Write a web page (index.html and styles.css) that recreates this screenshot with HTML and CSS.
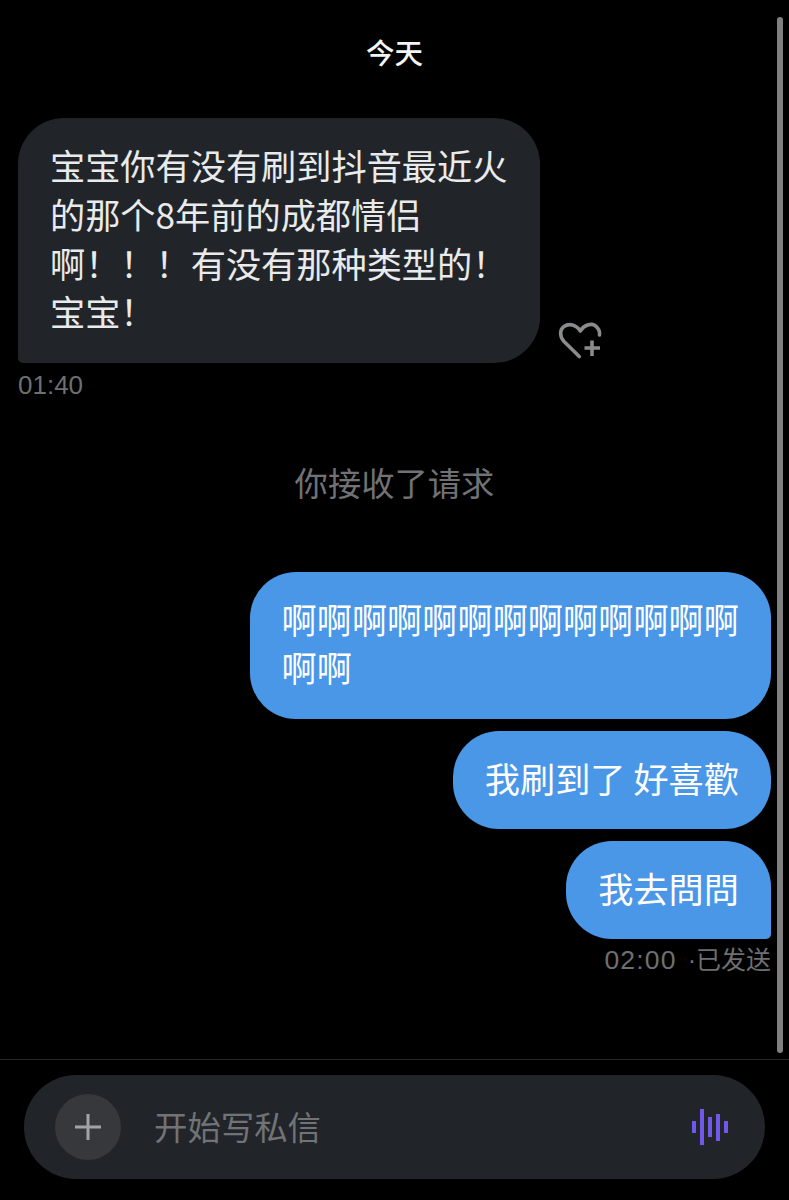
FILE: index.html
```html
<!DOCTYPE html>
<html lang="zh">
<head>
<meta charset="utf-8">
<title>今天</title>
<link rel="stylesheet" href="styles.css">
</head>
<body>
<div class="screen">
  <main class="thread">
    <div class="day">今天</div>
    <div class="incoming">
      <div class="bubble gray">宝宝你有没有刷到抖音最近火<br>的那个8年前的成都情侣<br>啊！！！有没有那种类型的！<br>宝宝！</div>
      <svg class="react" viewBox="0 0 48 42" width="48" height="42" fill="none" stroke="#8a8b8d" stroke-width="3.6" stroke-linecap="round" stroke-linejoin="round">
        <path d="M23.3 36.5L8 21.5C3 16 4 9 8 6.5C13 3 20 4.5 24.3 11C28 5 35 3 39 5.5C42.5 8 44 11 43.5 15"/>
        <path d="M28.5 28H44M36 20.5V36" stroke-linecap="butt"/>
      </svg>
    </div>
    <div class="stamp">01:40</div>
    <div class="notice">你接收了请求</div>
    <div class="outgoing">
      <div class="bubble blue">啊啊啊啊啊啊啊啊啊啊啊啊啊<br>啊啊</div>
      <div class="bubble blue">我刷到了 好喜歡</div>
      <div class="bubble blue last">我去問問</div>
      <div class="stamp sent"><span class="clock">02:00</span> ·已发送</div>
    </div>
  </main>
  <footer class="composer">
    <div class="field">
      <div class="plus">
        <svg viewBox="0 0 28 28" width="28" height="28" fill="none" stroke="#a3a3a6" stroke-width="3"><path d="M1 14H27M14 1V27"/></svg>
      </div>
      <div class="placeholder">开始写私信</div>
      <div class="wave"><i class="b1"></i><i class="b2"></i><i class="b3"></i><i class="b4"></i><i class="b1"></i></div>
    </div>
  </footer>
  <div class="scrollbar"></div>
</div>
</body>
</html>
```
FILE: styles.css
```css
* { box-sizing: border-box; }
html, body { margin: 0; background: #000; }
body { font-family: "Noto Sans CJK SC", "Noto Sans CJK TC", sans-serif; }
.screen { position: relative; width: 789px; height: 1200px; overflow: hidden; background: #000; display: flex; flex-direction: column; }
.thread { flex: 1; min-height: 0; padding: 0 18px; display: flex; flex-direction: column; }
.day { height: 108px; padding-top: 31px; text-align: center; font-size: 28.5px; line-height: 42px; font-weight: 500; color: #f4f4f4; margin-bottom: 10px; }
.incoming { display: flex; align-items: flex-end; }
.bubble { font-size: 35.2px; line-height: 48.8px; padding: 23px 32px 26.5px; color: #fff; border-radius: 46px; white-space: nowrap; }
.gray { width: 522px; background: #212529; color: #e9eaeb; border-bottom-left-radius: 5px; }
.react { margin: 0 0 1px 16px; }
.stamp { font-family: "Liberation Sans", "Noto Sans CJK SC", sans-serif; font-size: 26px; line-height: 30px; color: #6e6f71; margin-top: 7px; }
.notice { margin-top: 57px; text-align: center; font-size: 33.3px; line-height: 50px; color: #707275; }
.outgoing { margin-top: 65px; display: flex; flex-direction: column; align-items: flex-end; gap: 12px; }
.blue { background: #4a97e8; }
.last { border-bottom-right-radius: 5px; }
.outgoing .sent { margin-top: -6px; font-size: 25px; }
.clock { font-size: 26.5px; letter-spacing: 1.2px; margin-right: 4px; }
.composer { height: 141px; flex: none; border-top: 1px solid #26282b; padding: 15px 24px 0; }
.field { height: 104px; background: #212529; border-radius: 52px; display: flex; align-items: center; padding: 0 37px 0 31px; }
.plus { width: 66px; height: 66px; border-radius: 50%; background: #37383c; display: flex; align-items: center; justify-content: center; }
.placeholder { flex: 1; margin-left: 33px; padding-bottom: 4px; font-size: 33.4px; color: #717376; }
.wave { display: flex; align-items: center; gap: 4px; }
.wave i { display: block; width: 4px; background: #7058e8; }
.b1 { height: 12px; }
.b2 { height: 36px; }
.b3 { height: 20px; }
.b4 { height: 27px; }
.scrollbar { position: absolute; left: 777px; top: 17px; width: 6px; height: 1036px; border-radius: 3px; background: #808080; }
```
